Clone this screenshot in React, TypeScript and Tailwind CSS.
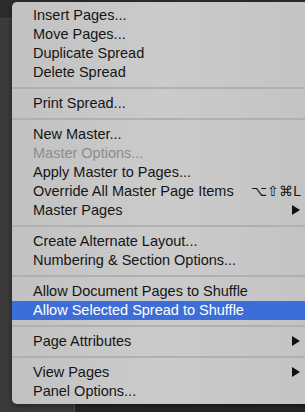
import React from "react";

type Item =
  | { sep: true }
  | { label: string; disabled?: boolean; selected?: boolean; shortcut?: string; sub?: boolean; sep?: false };

const items: Item[] = [
  { label: "Insert Pages..." },
  { label: "Move Pages..." },
  { label: "Duplicate Spread" },
  { label: "Delete Spread" },
  { sep: true },
  { label: "Print Spread..." },
  { sep: true },
  { label: "New Master..." },
  { label: "Master Options...", disabled: true },
  { label: "Apply Master to Pages..." },
  { label: "Override All Master Page Items", shortcut: "⌥⇧⌘L" },
  { label: "Master Pages", sub: true },
  { sep: true },
  { label: "Create Alternate Layout..." },
  { label: "Numbering & Section Options..." },
  { sep: true },
  { label: "Allow Document Pages to Shuffle" },
  { label: "Allow Selected Spread to Shuffle", selected: true },
  { sep: true },
  { label: "Page Attributes", sub: true },
  { sep: true },
  { label: "View Pages", sub: true },
  { label: "Panel Options..." },
];

function Arrow({ white }: { white?: boolean }) {
  return (
    <svg width="8" height="10" viewBox="0 0 8 10">
      <path d="M0 0 L8 5 L0 10 Z" fill={white ? "#fff" : "#111"} />
    </svg>
  );
}

export default function App() {
  return (
    <div
      className="relative w-[305px] h-[412px] overflow-hidden bg-[#262626]"
      style={{ fontFamily: '"Liberation Sans", Arial, sans-serif' }}
    >
      <div className="flex h-full">
        <div className="w-[75px] h-full bg-[#3b3b3b] border-r border-[#555]" />
        <div className="flex-1" />
      </div>
      <div className="absolute left-0 top-0 w-full h-[19px] bg-[#2c2c2c] border-b border-[#444]" />
      <div className="absolute left-[12px] top-[2px] w-[305px] h-[402px] rounded-[5px] bg-gradient-to-r from-[#c2c2c2] via-[#cbcbcb] to-[#c3c3c3] pt-[4px] pb-[3px] shadow-[0_2px_6px_rgba(0,0,0,0.4)]">
        {items.map((it, i) =>
          it.sep ? (
            <div key={i} className="h-[12px] flex items-center">
              <div className="w-full h-[2px] bg-[#b0b0b0]" />
            </div>
          ) : (
            <div
              key={i}
              className={`h-[19px] flex items-center pl-[21px] pr-[17px] text-[14.5px] leading-none pb-[1px] ${
                it.selected
                  ? "bg-[#3d6ed7] text-white"
                  : it.disabled
                  ? "text-[#8c8c8c]"
                  : "text-[#151515]"
              }`}
            >
              <span className="flex-1 whitespace-nowrap">{it.label}</span>
              {it.shortcut && (
                <span className="whitespace-nowrap text-[14px] -mr-[1px]">{it.shortcut}</span>
              )}
              {it.sub && <Arrow white={it.selected} />}
            </div>
          )
        )}
      </div>
    </div>
  );
}
